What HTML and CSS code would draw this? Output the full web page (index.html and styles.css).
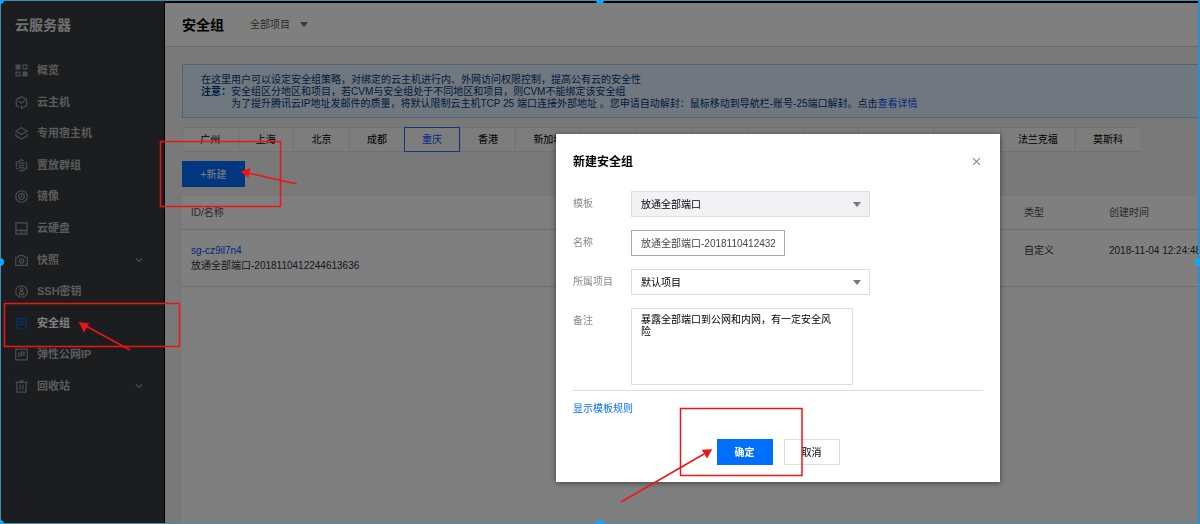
FILE: index.html
```html
<!DOCTYPE html>
<html lang="zh-CN">
<head>
<meta charset="utf-8">
<meta name="viewport" content="width=device-width, initial-scale=1">
<title>安全组</title>
<link rel="stylesheet" href="styles.css">
</head>
<body>
<div class="app">
  <aside class="sidebar">
    <h2 class="product">云服务器</h2>
    <nav>
      <ul class="menu">
        <li><a href="#"><svg class="icon" viewBox="0 0 14 14"><path class="fill" d="M.5.500h5.500v5.500H.5zM8 8h5.500v5.500H8z"/><path d="M8.700 1.200h4.100v4.100H8.700zM1.200 8.700h4.100v4.100H1.200z"/></svg>概览</a></li>
        <li><a href="#"><svg class="icon" viewBox="0 0 14 14"><path d="M4.500 12.200 1.400 10.300V4L7 .8 12.600 4v6.300L7 13.300V10M3.500 5.300 7 7.500l3.700-2.300"/></svg>云主机</a></li>
        <li><a href="#"><svg class="icon" viewBox="0 0 14 14"><path d="M7 .8l6 3.600L7 8 1 4.400zM1 7v2.500L7 13l6-3.500V7"/></svg>专用宿主机</a></li>
        <li><a href="#"><svg class="icon" viewBox="0 0 14 14"><path d="M1.400 9V4L7 .8l2.500 1.400M12.600 5v5L7 13.200l-2.500-1.400M11 3.200l1.600.9M1.400 10l1.600.9M4 5.500 5 4.500h4l1 1M4 8.500l1 1h4l1-1M4 7h6"/></svg>置放群组</a></li>
        <li><a href="#"><svg class="icon" viewBox="0 0 14 14"><circle cx="7" cy="7" r="6.200"/><circle cx="7" cy="7" r="3"/><circle class="fill" cx="7" cy="7" r="1"/></svg>镜像</a></li>
        <li><a href="#"><svg class="icon" viewBox="0 0 14 14"><path d="M1 1h12v12H1zM1 9h12M9.500 11h1.500M7 9v4"/></svg>云硬盘</a></li>
        <li><a href="#"><svg class="icon" viewBox="0 0 14 14"><path d="M.8 3.500h2.700l1-1.800h5l1 1.800h2.700v8.700H.8z"/><circle cx="7" cy="7.500" r="2.400"/><circle class="fill" cx="7" cy="7.500" r=".7"/></svg>快照<svg class="chevron" viewBox="0 0 8 8"><path d="M1 2.500l3 3 3-3"/></svg></a></li>
        <li><a href="#"><svg class="icon" viewBox="0 0 14 14"><circle cx="7" cy="7" r="6.200"/><circle cx="7" cy="4.700" r="1.500"/><path d="M6.500 6.200 4.800 8.500v1.800h4.400V8.500L7.500 6.200M6.900 8.500v1"/></svg>SSH密钥</a></li>
        <li><a href="#" class="active" aria-current="page"><svg class="icon" viewBox="0 0 14 14"><path d="M.5 1.500h13M2 1.500v8.300C2 11.500 4 13 7 13s5-1.500 5-3.200V1.500M4.500 5h5M4.500 8h5"/></svg>安全组</a></li>
        <li><a href="#"><svg class="icon" viewBox="0 0 14 14"><path d="M.8 1.200h12.400v11.600H.8zM4 4.500v5M6.500 9.500v-5h3.200v2.800H6.500"/></svg>弹性公网IP</a></li>
        <li><a href="#"><svg class="icon" viewBox="0 0 14 14"><path d="M.5 2.500h13M4.500 1h5M2 2.500v10.500h10V2.500M5.500 5v5.500M8.500 5v5.500"/></svg>回收站<svg class="chevron" viewBox="0 0 8 8"><path d="M1 2.500l3 3 3-3"/></svg></a></li>
      </ul>
    </nav>
  </aside>

  <main class="main">
    <header class="topbar">
      <h1>安全组</h1>
      <button class="project" type="button">全部项目<span class="caret"></span></button>
    </header>
    <div class="content">
      <div class="notice">
        <p>在这里用户可以设定安全组策略，对绑定的云主机进行内、外网访问权限控制，提高公有云的安全性</p>
        <p><strong>注意：</strong>安全组区分地区和项目，若CVM与安全组处于不同地区和项目，则CVM不能绑定该安全组</p>
        <p class="indent">为了提升腾讯云IP地址发邮件的质量，将默认限制云主机TCP 25 端口连接外部地址 。您申请自动解封：鼠标移动到导航栏-账号-25端口解封。点击<a href="#">查看详情</a></p>
      </div>
      <div class="regions">
        <button type="button">广州</button>
        <button type="button">上海</button>
        <button type="button">北京</button>
        <button type="button">成都</button>
        <button type="button" class="selected">重庆</button>
        <button type="button">香港</button>
        <button type="button">新加坡</button>
        <span></span><span></span><span></span><span></span><span></span><span></span><span></span>
        <button type="button">法兰克福</button>
        <button type="button">莫斯科</button>
      </div>
      <button class="create" type="button">+新建</button>
      <div class="card">
        <table class="groups">
          <thead>
            <tr><th>ID/名称</th><th class="col-type">类型</th><th class="col-time">创建时间</th></tr>
          </thead>
          <tbody>
            <tr>
              <td><a href="#">sg-cz9il7n4</a><br>放通全部端口-2018110412244613636</td>
              <td>自定义</td>
              <td>2018-11-04 12:24:48</td>
            </tr>
          </tbody>
        </table>
      </div>
    </div>
  </main>
</div>

<div class="overlay">
  <form class="dialog" role="dialog" aria-labelledby="dialog-title">
    <div class="dialog-head">
      <h2 id="dialog-title">新建安全组</h2>
      <button class="close" type="button" aria-label="关闭"><svg viewBox="0 0 8 8"><path d="M1 1l6 6M7 1 1 7"/></svg></button>
    </div>
    <div class="fields">
      <label for="template">模板</label>
      <div class="select shaded"><select id="template"><option>放通全部端口</option></select><span class="caret"></span></div>
      <label for="name">名称</label>
      <input id="name" type="text" value="放通全部端口-20181104124322">
      <label for="project">所属项目</label>
      <div class="select"><select id="project"><option>默认项目</option></select><span class="caret"></span></div>
      <label for="remark">备注</label>
      <textarea id="remark">暴露全部端口到公网和内网，有一定安全风险</textarea>
    </div>
    <div class="rules"><a href="#">显示模板规则</a></div>
    <div class="actions">
      <button class="primary" type="button">确定</button>
      <button class="secondary" type="button">取消</button>
    </div>
  </form>
</div>

<div class="frame"><i class="tl"></i><i class="t"></i><i class="l"></i><i class="r"></i><i class="bl"></i><i class="b"></i></div>

<svg class="marks" width="1200" height="524" viewBox="0 0 1200 524" aria-hidden="true">
  <rect x="160.500" y="141.500" width="120" height="65"/>
  <rect x="4.500" y="303.500" width="175" height="43"/>
  <rect x="680.500" y="408.500" width="121.500" height="67"/>
  <path d="M297 184 248 173M130 350 86 326M621 502 704 454"/>
  <path class="head" d="M242 172l7.500-3-1.500 7.500zM80 323l8 1-4 7zM711 450l-4 7-4-6.500z"/>
</svg>
</body>
</html>
```

FILE: styles.css
```css
* { box-sizing: border-box; }

body {
  margin: 0;
  overflow: hidden;
  color: #333;
  background: #000;
  font: 10px/15px "Liberation Sans", "Noto Sans CJK SC", sans-serif;
}

h1, h2, p, ul { margin: 0; padding: 0; }
a { color: #0052ff; text-decoration: none; }
button, input, select, textarea { font: inherit; color: inherit; }
button { padding: 0; border: 0; background: none; }

.app {
  display: flex;
  min-height: 100vh;
}

/* Sidebar */
.sidebar {
  flex: 0 0 165px;
  padding: 15px 0 0 15px;
  background: #393b3c;
  border-right: 1px solid #000;
}
.product {
  color: #e0e0e0;
  font-size: 14px;
  line-height: 20px;
}
.menu {
  display: grid;
  grid-auto-rows: 1fr;
  height: 347px;
  margin-top: 20px;
  list-style: none;
}
.menu a {
  display: flex;
  align-items: center;
  height: 100%;
  color: #b4b6b8;
  font-size: 11px;
  font-weight: bold;
}
.menu .active { color: #fff; }
.icon {
  width: 13px;
  height: 13px;
  margin-right: 9px;
  fill: none;
  stroke: #97999b;
  stroke-width: 1.3;
}
.icon .fill { fill: #97999b; stroke: none; }
.active .icon { stroke: #0062e6; }
.chevron {
  width: 8px;
  height: 8px;
  margin: 0 21px 0 auto;
  fill: none;
  stroke: #97999b;
  stroke-width: 1.2;
}

/* Page */
.main {
  display: flex;
  flex: 1;
  flex-direction: column;
  min-width: 0;
  margin-top: 3px;
  background: #f2f2f2;
}
.topbar {
  display: flex;
  align-items: center;
  gap: 26px;
  height: 44px;
  padding-left: 17px;
  background: #fff;
  border-bottom: 1px solid #d0d0d0;
}
.topbar h1 {
  color: #000;
  font-size: 14px;
  line-height: 20px;
}
.project {
  display: flex;
  align-items: center;
  gap: 10px;
  color: #555;
}
.caret {
  border: 4px solid transparent;
  border-top: 5px solid #777;
  border-bottom: 0;
}
.content {
  display: flex;
  flex: 1;
  flex-direction: column;
  align-items: flex-start;
  gap: 9px;
  padding: 17px 0 0 17px;
}
.notice {
  align-self: stretch;
  padding: 9px 18px 7px;
  color: #003b80;
  background: #e1eefc;
  border: 1px solid #a4cbe6;
  line-height: 12px;
  white-space: nowrap;
}
.notice .indent { padding-left: 30px; }
.regions {
  display: grid;
  grid-template-columns: repeat(6, 111fr) 130fr repeat(5, 111fr) 150fr 133fr 150fr 130fr;
  width: 100%;
  max-width: 958px;
  height: 25px;
}
.regions > * {
  min-width: 0;
  color: #000;
  background: #fbfbfb;
  border: 1px solid #e4e4e4;
  border-right: 0;
  white-space: nowrap;
}
.regions .selected {
  color: #0052ff;
  border: 1px solid #3366ff;
}
.create {
  width: 63px;
  height: 26px;
  color: #fff;
  background: #006eff;
}
.card {
  flex: 1;
  align-self: stretch;
  background: #fff;
  overflow: hidden;
}
.groups {
  width: 100%;
  border-collapse: collapse;
  table-layout: fixed;
}
.groups th, .groups td {
  padding: 0 0 0 9px;
  text-align: left;
  white-space: nowrap;
  border-bottom: 1px solid #dadada;
}
.groups th {
  height: 33px;
  color: #555;
  font-weight: normal;
}
.groups td {
  height: 57px;
  padding-top: 13px;
  vertical-align: top;
}
.col-type { width: 85px; }
.col-time { width: 100px; }

/* Dialog */
.overlay {
  position: fixed;
  inset: 0;
  display: flex;
  align-items: flex-start;
  justify-content: center;
  padding: 134px 0 0 356px;
  background: rgba(0, 0, 0, .5);
}
.dialog {
  width: 444px;
  padding: 17px;
  background: #fff;
  box-shadow: 0 1px 6px rgba(0, 0, 0, .5);
}
.dialog-head {
  display: flex;
  align-items: center;
  justify-content: space-between;
}
.dialog-head h2 {
  color: #000;
  font-size: 12px;
  line-height: 22px;
}
.close {
  display: flex;
  padding: 0 2px 2px;
}
.close svg {
  width: 9px;
  height: 9px;
  stroke: #888;
}
.fields {
  display: grid;
  grid-template-columns: 58px auto;
  justify-items: start;
  row-gap: 13px;
  margin-top: 18px;
  padding-bottom: 5px;
  border-bottom: 1px solid #ddd;
}
.fields label {
  color: #888;
  line-height: 26px;
}
.select {
  display: grid;
  align-items: center;
  width: 239px;
}
.select select, .select .caret { grid-area: 1 / 1; }
.select .caret {
  justify-self: end;
  margin-right: 9px;
  pointer-events: none;
}
.fields select, .fields input, .fields textarea {
  display: block;
  width: 100%;
  height: 26px;
  margin: 0;
  padding: 0 9px;
  color: #000;
  background: #fff;
  border: 1px solid #ddd;
  border-radius: 0;
  appearance: none;
}
.fields .shaded select { background: #f2f2f5; }
.fields input {
  width: 154px;
  padding-bottom: 2px;
  color: #444;
  border-color: #aaa;
}
.fields textarea {
  width: 222px;
  height: 77px;
  padding: 5px 16px 5px 9px;
  line-height: 12px;
  resize: none;
}
.rules { margin-top: 10px; }
.rules a { color: #006eff; }
.actions {
  display: flex;
  justify-content: center;
  gap: 11px;
  margin-top: 23px;
}
.actions button {
  width: 56px;
  height: 26px;
}
.primary {
  color: #fff;
  background: #006eff;
  font-weight: bold;
}
.secondary {
  color: #000;
  border: 1px solid #ddd;
}

/* Selection frame and hand-drawn marks */
.frame {
  position: fixed;
  inset: 0;
  border: 1px solid #3f8fb8;
  border-right: 2px solid #2b8fcb;
  pointer-events: none;
}
.frame i {
  position: absolute;
  width: 8px;
  height: 8px;
  margin: -4px;
  background: #12a5fb;
  border-radius: 50%;
}
.tl { top: -1px; left: -1px; }
.t { top: -1px; left: 50%; }
.l { top: 50%; left: -1px; }
.r { top: 50%; right: -1px; }
.bl { bottom: -1px; left: -1px; }
.b { bottom: -1px; left: 50%; }
.marks {
  position: absolute;
  top: 0;
  left: 0;
  fill: none;
  stroke: #f01414;
  stroke-width: 1.5;
  pointer-events: none;
}
.marks .head { fill: #f01414; }
```
